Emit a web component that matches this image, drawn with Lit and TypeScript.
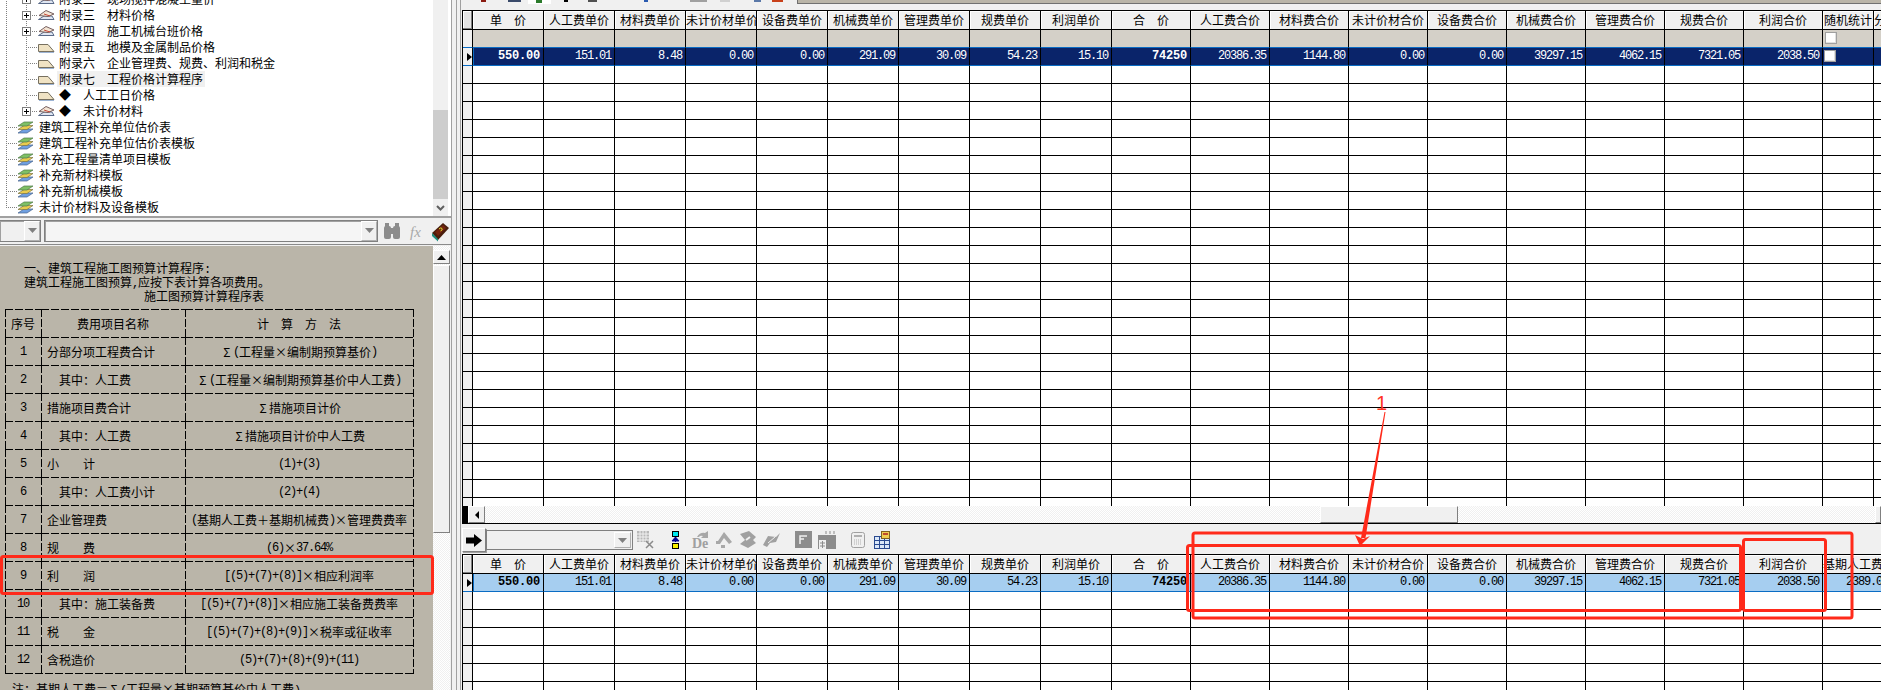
import { LitElement, html, css, svg } from "lit";
import { customElement } from "lit/decorators.js";

const part = (s: string) =>
  s.split(/([\x20-\x7e]+|[Σ×])/).filter(Boolean).map((p) =>
    /^[Σ×]$/.test(p)
      ? html`<span class="f">${p}</span>`
      : /^[\x20-\x7e]+$/.test(p)
      ? html`<span class="a">${p}</span>`
      : p
  );

type Tree = { level: 1 | 2; text: string; kind: "plus" | "leaf" | "layer"; last?: boolean; sel?: boolean };
const TREE: Tree[] = [
  { level: 2, text: "附录二　现场搅拌混凝土量价", kind: "plus" },
  { level: 2, text: "附录三　材料价格", kind: "plus" },
  { level: 2, text: "附录四　施工机械台班价格", kind: "plus" },
  { level: 2, text: "附录五　地模及金属制品价格", kind: "leaf" },
  { level: 2, text: "附录六　企业管理费、规费、利润和税金", kind: "leaf" },
  { level: 2, text: "附录七　工程价格计算程序", kind: "leaf", sel: true },
  { level: 2, text: "◆　人工工日价格", kind: "leaf" },
  { level: 2, text: "◆　未计价材料", kind: "plus", last: true },
  { level: 1, text: "建筑工程补充单位估价表", kind: "layer" },
  { level: 1, text: "建筑工程补充单位估价表模板", kind: "layer" },
  { level: 1, text: "补充工程量清单项目模板", kind: "layer" },
  { level: 1, text: "补充新材料模板", kind: "layer" },
  { level: 1, text: "补充新机械模板", kind: "layer" },
  { level: 1, text: "未计价材料及设备模板", kind: "layer", last: true },
];

const treeIcon = (t: Tree) => {
  const vTop = t.level === 1 && t.last ? 8 : 16;
  const guides = svg`
    <path d="M6.5 0V${vTop}" class="dot"></path>
    ${t.level === 2
      ? svg`<path d="M26.5 0V${t.last ? 8 : 16}M26 8.5H38" class="dot"></path>`
      : svg`<path d="M6 8.5H18" class="dot"></path>`}`;
  let icon;
  if (t.kind === "layer") {
    icon = svg`
      <polygon points="18,14 24,10 33,10 27,14" fill="#6f9fe0" stroke="#47648c" stroke-width=".7"></polygon>
      <polygon points="18,10.5 24,6.5 33,6.5 27,10.5" fill="#e9cb4e" stroke="#7c7440" stroke-width=".7"></polygon>
      <polygon points="18,7 24,3 33,3 27,7" fill="#7fc065" stroke="#4f7a48" stroke-width=".7"></polygon>`;
  } else if (t.kind === "leaf") {
    icon = svg`
      <polygon points="38.5,12.5 38.5,5.5 48,5.500 54,12.500" fill="#f0e3c4" stroke="#77705f"></polygon>
      <path d="M39 13.5H54" stroke="#9db4d4"></path>`;
  } else {
    icon = svg`
      <rect x="22.5" y="4.5" width="8" height="8" fill="#fff" stroke="#808080"></rect>
      <path d="M24 8.5h5M26.5 6v5" stroke="#000"></path>
      <polygon points="38.5,12.5 44,9 52,9 54,12.5" fill="#dfe6f2" stroke="#5a6a88"></polygon>
      <polygon points="39,8.5 46,3.5 54,7 48,9.5" fill="#f3e5d5" stroke="#77605f"></polygon>
      <path d="M44 7l6 2" stroke="#c84a3a"></path>`;
  }
  return html`<svg class="ticon" width=${t.level === 2 ? 56 : 36} height="16">${guides}${icon}</svg>`;
};

type DocRow = [string, string, string, boolean?];
const DOC: DocRow[] = [
  ["1", "分部分项工程费合计", "Σ(工程量×编制期预算基价)"],
  ["2", "其中：人工费", "Σ(工程量×编制期预算基价中人工费)", true],
  ["3", "措施项目费合计", "Σ措施项目计价"],
  ["4", "其中：人工费", "Σ措施项目计价中人工费", true],
  ["5", "小　　计", "(1)+(3)"],
  ["6", "其中：人工费小计", "(2)+(4)", true],
  ["7", "企业管理费", "(基期人工费＋基期机械费)×管理费费率"],
  ["8", "规　　费", "(6)×37.64%"],
  ["9", "利　　润", "[(5)+(7)+(8)]×相应利润率"],
  ["10", "其中：施工装备费", "[(5)+(7)+(8)]×相应施工装备费费率", true],
  ["11", "税　　金", "[(5)+(7)+(8)+(9)]×税率或征收率"],
  ["12", "含税造价", "(5)+(7)+(8)+(9)+(11)"],
];

const H1 = ["单　价", "人工费单价", "材料费单价", "未计价材单价", "设备费单价", "机械费单价", "管理费单价", "规费单价", "利润单价",
  "合　价", "人工费合价", "材料费合价", "未计价材合价", "设备费合价", "机械费合价", "管理费合价", "规费合价", "利润合价"];
const V1 = ["550.00", "151.01", "8.48", "0.00", "0.00", "291.09", "30.09", "54.23", "15.10",
  "74250", "20386.35", "1144.80", "0.00", "0.00", "39297.15", "4062.15", "7321.05", "2038.50"];
const BOLD = new Set([0, 9]);

const blanks = (n: number, cols: number) =>
  Array.from({ length: n }, () => html`<div class="c ind"></div>${Array.from({ length: cols }, () => html`<div class="c"></div>`)}`);

@customElement("app-root")
export class AppRoot extends LitElement {
  static styles = css`
    :host { display: block; width: 1881px; height: 690px; overflow: hidden; position: relative; background: #f0f0f0; color: #000;
      font: 12px/16px "Noto Sans CJK SC", "Liberation Sans", sans-serif; }
    * { box-sizing: border-box; }
    .root { display: flex; width: 1881px; height: 690px; }
    .a { font-family: "Liberation Mono", monospace; font-size: 12px; letter-spacing: -1.2px; }
    .f { display: inline-block; width: 12px; text-align: center; }

    .left { width: 452px; height: 690px; display: flex; flex-direction: column; border-right: 1px solid #a0a0a0; flex: none; }
    .tree { height: 218px; display: flex; background: #fff; border-bottom: 2px solid #a0a0a0; overflow: hidden; flex: none; }
    .treelist { width: 433px; margin-top: -9px; flex: none; }
    .trow { display: flex; height: 16px; line-height: 16px; white-space: nowrap; }
    .ticon { flex: none; }
    .dot { fill: none; stroke: #808080; stroke-dasharray: 1 1; }
    .ttext { padding: 0 2px; margin-left: 1px; }
    .ttext.sel { background: #f0f0f0; }
    .tscroll { width: 15px; background: #f0f0f0; display: flex; flex-direction: column; flex: none; }
    .tthumb { height: 89px; margin-top: 110px; background: #cdcdcd; flex: none; }
    .tarrow { height: 17px; display: flex; align-items: center; justify-content: center; }

    .combos { height: 27px; display: flex; align-items: center; gap: 3px; background: #f0f0f0; border-bottom: 1px solid #8a8a8a; flex: none; padding-bottom: 1px; }
    .combo { height: 22px; border: 1px solid #808080; background: #f0f0f0; display: flex; justify-content: flex-end; flex: none; box-shadow: inset 1px 1px #a0a0a0; }
    .c1 { width: 41px; border-left: 0; }
    .c2 { width: 334px; background: #f5f5f5; }
    .drop { width: 16px; background: #f0f0f0; border: 1px solid #fff; border-right-color: #b0b0b0; border-bottom-color: #b0b0b0; display: flex; align-items: center; justify-content: center; }
    .tools { display: flex; align-items: center; margin-left: -3px; }

    .docrow { flex: 1; display: flex; min-height: 0; margin-top: 1px; }
    .doc { width: 433px; background: #bab5a9; padding-top: 15px; overflow: hidden; flex: none; }
    .para { padding-left: 24px; height: 14px; line-height: 14px; white-space: nowrap; }
    .ctr { padding-left: 144px; }
    .dtable { display: grid; grid-template-columns: 36px 144px 228px; width: 409px; margin: 6px 0 0 5px; padding: 0 1px 1px 0;
      background:
        repeating-linear-gradient(180deg, #000 0 8px, transparent 8px 10px) right top / 1px 100% no-repeat,
        repeating-linear-gradient(90deg, #000 0 8px, transparent 8px 10px) left bottom / 100% 1px no-repeat; }
    .dc { height: 28px; display: flex; align-items: center; white-space: nowrap; line-height: 16px; padding-top: 2px;
      background:
        repeating-linear-gradient(90deg, #000 0 8px, transparent 8px 10px) left top / 100% 1px no-repeat,
        repeating-linear-gradient(180deg, #000 0 8px, transparent 8px 10px) left top / 1px 100% no-repeat; }
    .mid { justify-content: center; }
    .nm { padding-left: 6px; }
    .nm.ind2 { padding-left: 18px; }
    .note { padding-left: 12px; margin-top: 8px; white-space: nowrap; height: 14px; line-height: 14px; }
    .dscroll { width: 17px; display: flex; flex-direction: column; flex: none; padding-top: 4px;
      background: repeating-conic-gradient(#f0f0f0 0 25%, #fff 0 50%) 0 0 / 2px 2px; }
    .raised { background: #f0f0f0; border: 1px solid; border-color: #fff #808080 #808080 #fff; display: flex; align-items: center; justify-content: center; flex: none; }
    .up { height: 14px; }
    .dthumb { height: 268px; margin-top: 1px; }

    .split { width: 10px; padding-left: 4px; flex: none; }
    .split div { width: 5px; height: 690px; border-left: 1px solid #a0a0a0; border-right: 1px solid #a0a0a0; }

    .right { width: 1419px; flex: none; display: flex; flex-direction: column; overflow: hidden; }
    .strip { height: 10px; display: flex; flex: none; overflow: hidden; border-bottom: 2px solid #f0f0f0; }
    .strip svg { flex: none; }
    .tan { flex: 1; height: 4px; background: #b9b4a7; border: 1px solid #707070; border-top: 0; border-right: 0; }
    .gwrap { overflow: hidden; flex: none; background: #fff; }
    .g1wrap { height: 496px; }
    .g2wrap { height: 136px; }
    .grid { display: grid; width: max-content; border-left: 1px solid #000; border-top: 1px solid #000; }
    .g1 { grid-template-columns: 10px repeat(9, 71px) repeat(9, 79px) 51px 60px; }
    .g2 { grid-template-columns: 10px repeat(9, 71px) repeat(9, 79px) 69px; }
    .c { height: 18px; border-right: 1px solid #000; border-bottom: 1px solid #000; white-space: nowrap; overflow: hidden; background: #fff; line-height: 17px; }
    .ind { background: #f0f0f0; display: flex; align-items: center; justify-content: flex-end; }
    .hd { height: 19px; background: #f0f0f0; text-align: center; line-height: 18px; box-shadow: inset 1px 1px #fff; }
    .corner { box-shadow: inset -1px -1px #808080, inset 1px 1px #fff; background: #e4e4e4; }
    .fl { background: #d4d0c8; padding-left: 1px; }
    .blue-b { border-bottom-color: #0a6cc4; }
    .num { text-align: right; padding-right: 3px; font-family: "Liberation Mono", monospace; font-size: 12px; letter-spacing: -1.2px; }
    .b { font-weight: 700; font-size: 12px; letter-spacing: -.2px; }
    .selA { background: #0a246a; color: #fff; border-bottom-color: #0a6cc4; }
    .selB { background: #a6cef0; color: #000; border-bottom-color: #0a6cc4; }
    .first { box-shadow: inset 1px 0 #0a6cc4; }
    .chk { width: 12px; height: 12px; background: #fff; border: 1px solid #a0a0a0; margin: 2px 0 0 1px; box-shadow: inset -1px -1px #e0e0e0; }

    .hs { height: 17px; display: flex; flex: none; background: repeating-conic-gradient(#f0f0f0 0 25%, #fff 0 50%) 0 0 / 2px 2px; }
    .blk { width: 6px; background: #000; flex: none; }
    .hbtn { width: 17px; }
    .hthumb { width: 138px; margin-left: 835px; }
    .hgrow { flex: 1; }
    .hend { width: 6px; }

    .bar { height: 31px; border-top: 1px solid #000; display: flex; align-items: center; padding-top: 2px; flex: none; background: #f0f0f0; }
    .arrowbtn { width: 24px; height: 24px; box-shadow: 1px 1px #a0a0a0; }
    .bcombo { width: 147px; height: 20px; border: 1px solid #808080; display: flex; justify-content: flex-end; background: #f0f0f0; flex: none; padding: 1px; }
    .bdrop { width: 17px; }
    .bar svg.ic { flex: none; margin-left: 2px; }
    .overlay { position: absolute; left: 0; top: 0; pointer-events: none; }
    .one { font: 20px "Liberation Sans", sans-serif; fill: #ff3322; }
    .left-txt { text-align: left; }
  `;

  render() {
    const arrowDown = html`<svg width="9" height="5"><path d="M0 0h9L4.500 5z" fill="#808080"></path></svg>`;
    return html`
      <div class="root">
        <div class="left">
          <div class="tree">
            <div class="treelist">
              ${TREE.map((t) => html`<div class="trow">
                ${treeIcon(t)}
                <div class="ttext ${t.sel ? "sel" : ""}">${t.text}</div>
              </div>`)}
            </div>
            <div class="tscroll">
              <div class="tthumb"></div>
              <div class="tarrow"><svg width="9" height="6"><path d="M1 1l3.500 3.500L8 1" fill="none" stroke="#606060" stroke-width="2"></path></svg></div>
            </div>
          </div>
          <div class="combos">
            <div class="combo c1"><div class="drop">${arrowDown}</div></div>
            <div class="combo c2"><div class="drop">${arrowDown}</div></div>
            <div class="tools">
              <svg width="72" height="22" viewBox="378 222 72 22">
                <g fill="#8c8c8c">
                  <rect x="384" y="228" width="7" height="13" rx="2"></rect>
                  <rect x="393" y="228" width="7" height="13" rx="2"></rect>
                  <rect x="390" y="230" width="4" height="6"></rect>
                  <rect x="385" y="225" width="4" height="4"></rect>
                  <rect x="395" y="225" width="4" height="4"></rect>
                </g>
                <text x="410" y="239" font-family="Liberation Serif" font-style="italic" font-size="15" fill="#a8a8a8">fx</text>
                <polygon points="432,235 443,225 449,230 438,242" fill="#4a1e0c"></polygon>
                <polygon points="432,235 438,241 438,243.500 432,238" fill="#1d8f80"></polygon>
                <polygon points="435,234 443,227 446,230 438,238" fill="#74240e"></polygon>
                <path d="M439 231q2-2 3-.5t-1.500 2.500" fill="none" stroke="#d8e02a"></path>
              </svg>
            </div>
          </div>
          <div class="docrow">
            <div class="doc">
              <div class="para">${part("一、建筑工程施工图预算计算程序:")}</div>
              <div class="para">${part("建筑工程施工图预算,应按下表计算各项费用。")}</div>
              <div class="para ctr">施工图预算计算程序表</div>
              <div class="dtable">
                <div class="dc mid">序号</div>
                <div class="dc mid">费用项目名称</div>
                <div class="dc mid">计　算　方　法</div>
                ${DOC.map((r) => html`
                  <div class="dc mid">${part(r[0])}</div>
                  <div class="dc nm ${r[3] ? "ind2" : ""}">${r[1]}</div>
                  <div class="dc mid">${part(r[2])}</div>`)}
              </div>
              <div class="note">${part("注：基期人工费＝Σ(工程量×基期预算基价中人工费)。")}</div>
            </div>
            <div class="dscroll">
              <div class="raised up"><svg width="9" height="5"><path d="M0 5h9L4.500 0z" fill="#000"></path></svg></div>
              <div class="raised dthumb"></div>
            </div>
          </div>
        </div>
        <div class="split"><div></div></div>
        <div class="right">
          <div class="strip">
            <svg width="335" height="8" viewBox="462 0 335 8">
              <rect x="481" y="0" width="5" height="2" fill="#8a1a10"></rect>
              <rect x="508" y="0" width="13" height="2" fill="#3a4a6a"></rect>
              <rect x="528" y="0" width="23" height="4" fill="#fff"></rect>
              <rect x="536" y="0" width="6" height="3" fill="#2a7a2a"></rect>
              <rect x="564" y="0" width="4" height="2" fill="#000"></rect>
              <rect x="588" y="0" width="9" height="2" fill="#505050"></rect>
              <rect x="644" y="0" width="4" height="2" fill="#2a5ab0"></rect>
              <rect x="690" y="0" width="17" height="2" fill="#a0a0a0"></rect>
              <rect x="720" y="0" width="10" height="2" fill="#d0d0d0"></rect>
              <rect x="754" y="0" width="7" height="2" fill="#5a78a8"></rect>
              <rect x="772" y="0" width="11" height="2" fill="#c8401a"></rect>
            </svg>
            <div class="tan"></div>
          </div>
          ${this.grid("g1")}
          <div class="hs">
            <div class="blk"></div>
            <div class="raised hbtn"><svg width="4" height="8"><path d="M4 0v8L0 4z" fill="#000"></path></svg></div>
            <div class="raised hthumb"></div>
            <div class="hgrow"></div>
            <div class="raised hend"></div>
          </div>
          <div class="bar">
            <div class="raised arrowbtn">
              <svg width="16" height="13"><path d="M0 3.500h8V0l8 6.500L8 13V9.500H0z" fill="#000"></path></svg>
            </div>
            <div class="bcombo"><div class="drop bdrop">${arrowDown}</div></div>
            ${this.barIcons()}
          </div>
          ${this.grid("g2")}
        </div>
      </div>
      ${this.overlay()}
    `;
  }

  grid(kind: "g1" | "g2") {
    const top = kind === "g1";
    const sel = top ? "selA" : "selB";
    return html`<div class="gwrap ${top ? "g1wrap" : "g2wrap"}">
      <div class="grid ${kind}">
        <div class="c hd corner"></div>
        ${H1.map((h) => html`<div class="c hd">${h}</div>`)}
        ${top
          ? html`<div class="c hd">随机统计</div><div class="c hd left-txt">分析</div>`
          : html`<div class="c hd left-txt">基期人工费</div>`}
        ${top
          ? html`<div class="c ind blue-b"></div>
              ${H1.map(() => html`<div class="c fl blue-b"></div>`)}
              <div class="c fl blue-b"><div class="chk"></div></div>
              <div class="c fl blue-b"></div>`
          : ""}
        <div class="c ind blue-b"><svg width="5" height="8"><path d="M0 0l5 4-5 4z" fill="#000"></path></svg></div>
        ${V1.map((v, i) => html`<div class="c num ${sel} ${BOLD.has(i) ? "b" : ""} ${i === 0 ? "first" : ""}">${v}</div>`)}
        ${top
          ? html`<div class="c ${sel}"><div class="chk"></div></div><div class="c ${sel}"></div>`
          : html`<div class="c num ${sel}">2389.05</div>`}
        ${blanks(top ? 25 : 6, top ? 20 : 19)}
      </div>
    </div>`;
  }

  barIcons() {
    return html`<svg class="ic" width="262" height="22" viewBox="635 529 262 22">
      <g fill="#9a9a9a">
        <rect x="637" y="531" width="12" height="11" fill="#b8b8b8"></rect>
        <path d="M637 534h12M637 537h12M637 540h12M640 531v11M643 531v11M646 531v11" stroke="#f0f0f0" fill="none"></path>
        <path d="M646 541l7 7M653 541l-7 7" stroke="#8a8a8a" stroke-width="1.500" fill="none"></path>
      </g>
      <rect x="672.500" y="531.500" width="6" height="5" fill="#00e8f0" stroke="#000"></rect>
      <path d="M675.500 537v5M672 541h7l-3.500-4z" fill="#000090" stroke="#000090"></path>
      <rect x="672.500" y="543.500" width="6" height="5" fill="#f8f000" stroke="#000"></rect>
      <text x="692" y="548" font-family="Liberation Serif" font-weight="700" font-size="14" fill="#a0a0a0">De</text>
      <path d="M697 537q3-5 8-4l3-2v7h-7l2-2q-3-1-4 1z" fill="#a8a8a8"></path>
      <path d="M716 544l8-12 8 10-3 2-5-6-4 6z" fill="#a8a8a8"></path>
      <path d="M716 541h4v3h-4zM721 545h4v3h-4z" fill="#a8a8a8"></path>
      <path d="M740 534l9-3 7 6-3 3 3 3-8 5-8-4 5-4z" fill="#a0a0a0"></path>
      <path d="M746 540l4-3" stroke="#f0f0f0" stroke-width="2"></path>
      <path d="M763 545l5-9 8 1 4-4-4 9-6 1-3 4z" fill="#a0a0a0"></path>
      <path d="M768 543l7-6" stroke="#f0f0f0"></path>
      <rect x="795" y="531" width="17" height="17" fill="#8c8c8c"></rect>
      <path d="M800 544v-8h7M800 539h4" stroke="#f0f0f0" stroke-width="1.500" fill="none"></path>
      <rect x="818" y="535" width="18" height="14" fill="#8c8c8c"></rect>
      <path d="M826 531v3M830 531v3M834 531v3" stroke="#8c8c8c"></path>
      <rect x="819" y="540" width="7" height="9" fill="#f0f0f0"></rect>
      <path d="M820 543h5M820 546h5M822.500 541v7" stroke="#8c8c8c"></path>
      <rect x="851.500" y="532.500" width="13" height="15" rx="2" fill="#f0f0f0" stroke="#a0a0a0"></rect>
      <rect x="854" y="535" width="8" height="2" fill="#b0b0b0"></rect>
      <path d="M854 540h8M854 542h8M854 544h8" stroke="#b0b0b0" stroke-dasharray="1 1"></path>
      <rect x="874.500" y="536.500" width="15" height="12" fill="#dbe8f8" stroke="#2a4a90"></rect>
      <path d="M874 540.500h15M874 544.500h15M879.500 537v11M884.500 537v11" stroke="#2a4a90"></path>
      <rect x="881.500" y="531.500" width="8" height="7" fill="#f0cc50" stroke="#806020"></rect>
      <path d="M883 534h5" stroke="#b02020" stroke-width="1.500"></path>
    </svg>`;
  }

  overlay() {
    return html`<svg class="overlay" width="1881" height="690">
      <g fill="none" stroke="#ff2a1a" stroke-width="3">
        <rect x="1.500" y="556.500" width="431" height="37" rx="2"></rect>
        <rect x="1187.500" y="545.500" width="553" height="65" rx="2"></rect>
        <rect x="1193" y="533" width="659" height="85" rx="2"></rect>
        <rect x="1743.500" y="539.500" width="82" height="71" rx="2"></rect>
      </g>
      <text class="one" x="1376" y="410">1</text>
      <polygon points="1385.500,412 1384.500,412 1361,538 1365.500,538" fill="#ff2a1a"></polygon>
      <polygon points="1360,546 1355,535 1363,539 1370,536" fill="#ff2a1a"></polygon>
    </svg>`;
  }
}
